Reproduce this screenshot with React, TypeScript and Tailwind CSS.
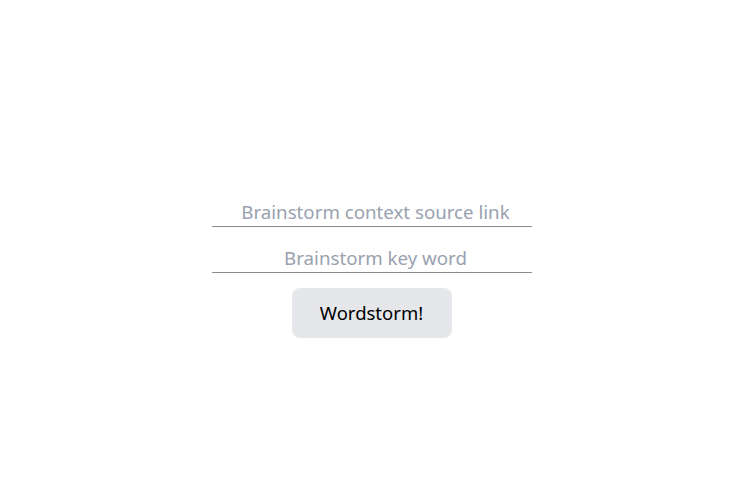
import React from "react";

export default function App() {
  return (
    <div
      className="min-h-screen flex flex-col items-center justify-center bg-white pt-[51px] pl-[6px]"
      style={{ fontFamily: '"Noto Sans", "Open Sans", sans-serif' }}
    >
      <input
        type="text"
        placeholder="Brainstorm context source link"
        className="w-80 h-[29px] mb-[17px] pl-2 pb-[2px] border-b border-[#8a8a8a] text-center text-[18.7px] leading-7 placeholder:text-gray-400 outline-none"
      />
      <input
        type="text"
        placeholder="Brainstorm key word"
        className="w-80 h-[29px] mb-[15px] pl-2 pb-[2px] border-b border-[#8a8a8a] text-center text-[18.7px] leading-7 placeholder:text-gray-400 outline-none"
      />
      <button className="w-40 h-[50px] rounded-lg bg-gray-200 text-[18.5px] text-black">
        Wordstorm!
      </button>
    </div>
  );
}
